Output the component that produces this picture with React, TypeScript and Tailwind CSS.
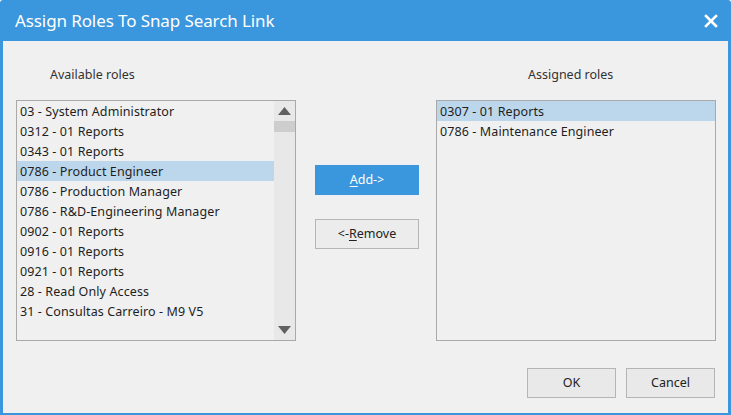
import React from 'react'

const available = [
  '03 - System Administrator',
  '0312 - 01 Reports',
  '0343 - 01 Reports',
  '0786 - Product Engineer',
  '0786 - Production Manager',
  '0786 - R&D-Engineering Manager',
  '0902 - 01 Reports',
  '0916 - 01 Reports',
  '0921 - 01 Reports',
  '28 - Read Only Access',
  '31 - Consultas Carreiro - M9 V5',
]

const assigned = ['0307 - 01 Reports', '0786 - Maintenance Engineer']

const font = { fontFamily: '"Noto Sans", "Open Sans", sans-serif' }

function Item({ label, selected }: { label: string; selected?: boolean }) {
  return (
    <div
      className={`h-[20px] leading-[21px] pl-[3px] text-[12.5px] text-[#1e1e1e] whitespace-nowrap tracking-[0.1px] ${
        selected ? 'bg-[#bcd7ec]' : ''
      }`}
    >
      {label}
    </div>
  )
}

function ScrollBar() {
  return (
    <div className="w-[21px] bg-[#e8e8e8] flex flex-col">
      <div className="h-[20px] flex items-center justify-center">
        <svg width="13" height="8" viewBox="0 0 13 8">
          <path d="M6.5 0 L13 8 L0 8 Z" fill="#606060" />
        </svg>
      </div>
      <div className="h-[11px] bg-[#cdcdcd]" />
      <div className="flex-1" />
      <div className="h-[20px] flex items-center justify-center">
        <svg width="13" height="8" viewBox="0 0 13 8">
          <path d="M0 0 L13 0 L6.5 8 Z" fill="#606060" />
        </svg>
      </div>
    </div>
  )
}

export default function App() {
  return (
    <div
      className="w-[731px] h-[415px] bg-[#3a96dd] flex flex-col pl-[3px] pr-[3px] pb-[2px] rounded-t-[3px]"
      style={font}
    >
      <div className="h-[41px] flex items-center justify-between pl-[12px] pr-[10px]">
        <span className="text-white text-[17px] leading-none tracking-[-0.1px]">
          Assign Roles To Snap Search Link
        </span>
        <svg width="14" height="14" viewBox="0 0 14 14">
          <path d="M2 2 L12 12 M12 2 L2 12" stroke="#ffffff" strokeWidth="2.6" strokeLinecap="square" />
        </svg>
      </div>

      <div className="flex-1 bg-[#f0f0f0] flex flex-col pt-[25px] pl-[13px] pr-[12px]">
        <div className="flex">
          <div className="w-[280px] flex flex-col">
            <div className="h-[18px] leading-[18px] pl-[34px] text-[12.5px] text-[#333]">Available roles</div>
            <div className="mt-[16px] h-[241px] border border-[#a9a9a9] flex">
              <div className="flex-1 overflow-hidden">
                {available.map((r) => (
                  <Item key={r} label={r} selected={r === '0786 - Product Engineer'} />
                ))}
              </div>
              <ScrollBar />
            </div>
          </div>

          <div className="w-[104px] ml-[19px] flex flex-col pt-[99px]">
            <button className="h-[30px] bg-[#3a96dd] text-white text-[12.5px]">
              <span className="underline underline-offset-2">A</span>dd-&gt;
            </button>
            <button className="mt-[24px] h-[30px] bg-[#ececec] border border-[#b5b5b5] text-[#222] text-[12.5px]">
              &lt;-<span className="underline underline-offset-2">R</span>emove
            </button>
          </div>

          <div className="w-[280px] ml-[17px] flex flex-col">
            <div className="h-[18px] leading-[18px] pl-[92px] text-[12.5px] text-[#333]">Assigned roles</div>
            <div className="mt-[16px] h-[241px] border border-[#a9a9a9]">
              {assigned.map((r, i) => (
                <Item key={r} label={r} selected={i === 0} />
              ))}
            </div>
          </div>
        </div>

        <div className="mt-[27px] flex justify-end gap-[10px] pr-[1px]">
          <button className="w-[89px] h-[30px] bg-[#e9e9e9] border border-[#b5b5b5] text-[12.5px] text-[#222]">
            OK
          </button>
          <button className="w-[89px] h-[30px] bg-[#e9e9e9] border border-[#b5b5b5] text-[12.5px] text-[#222]">
            Cancel
          </button>
        </div>
      </div>
    </div>
  )
}
